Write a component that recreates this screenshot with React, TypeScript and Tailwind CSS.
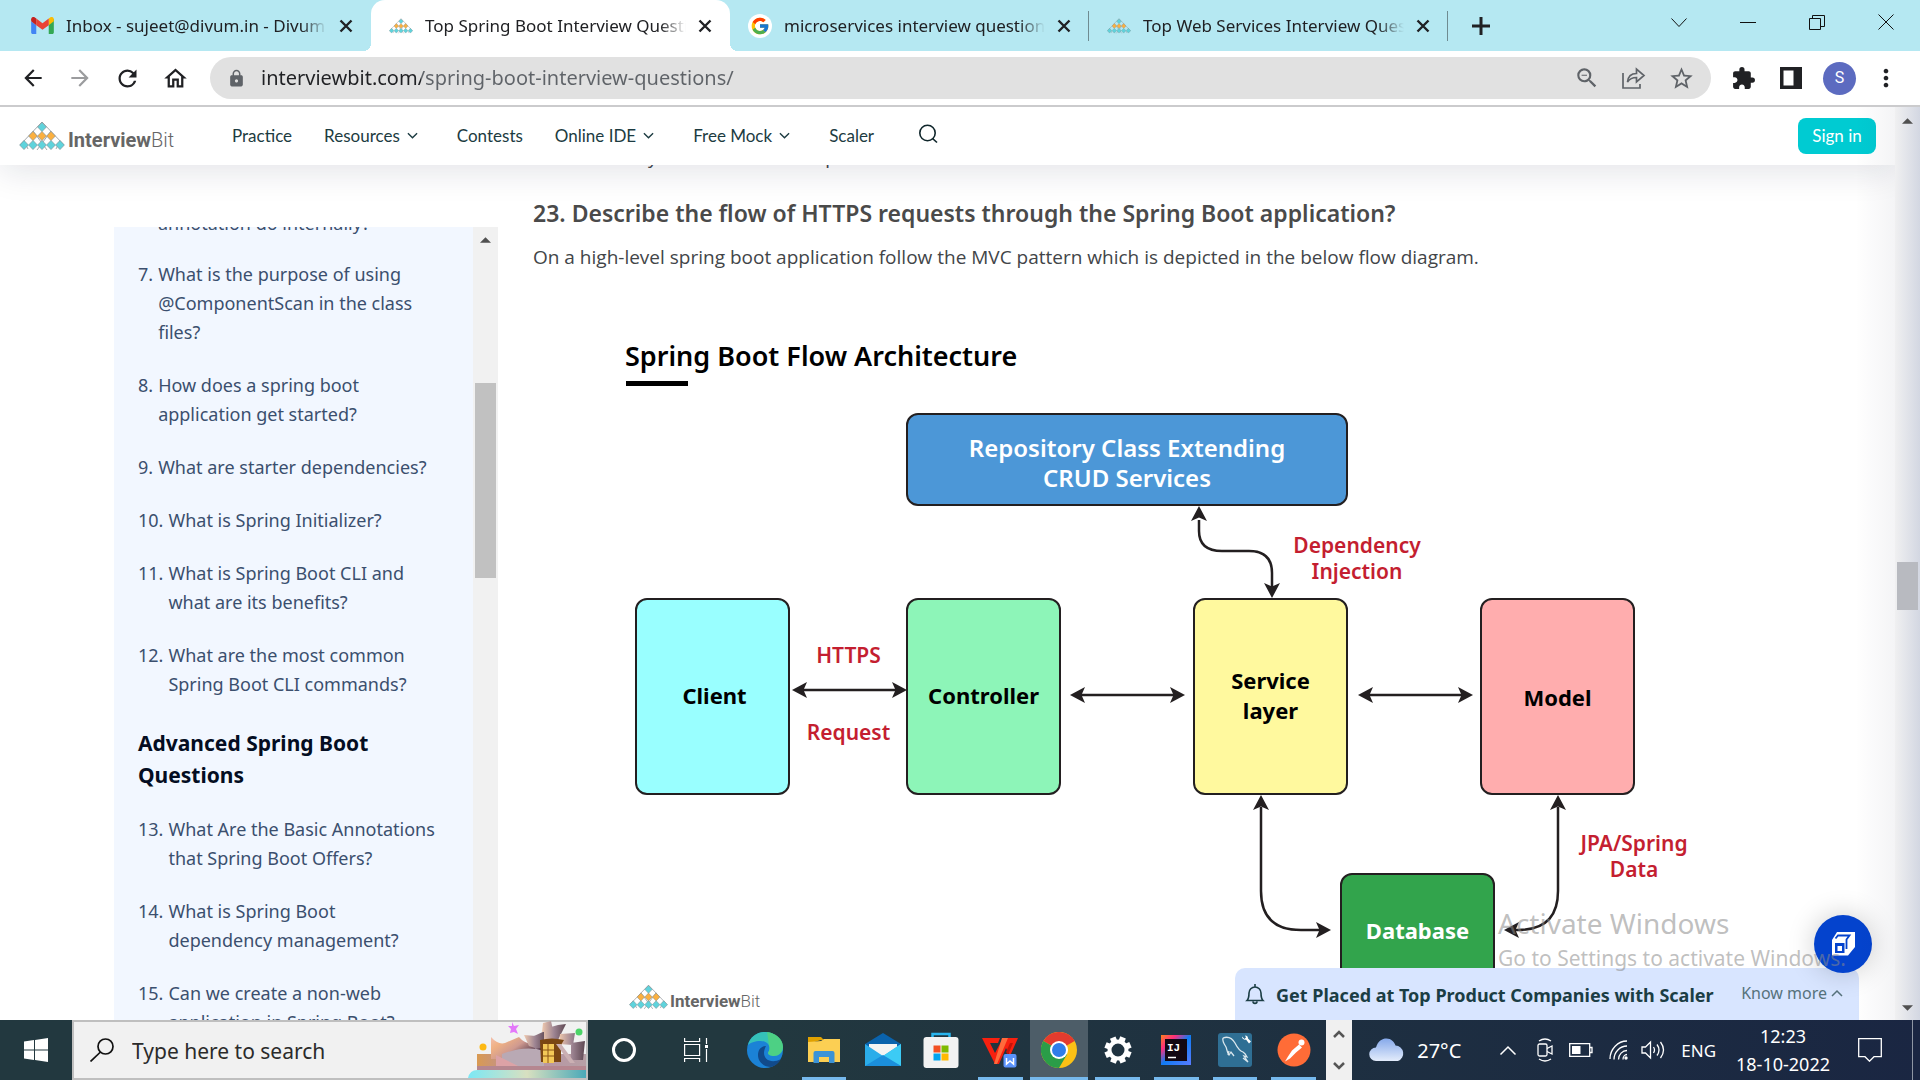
import type { ReactNode } from 'react';
import {
  MdArrowBack,
  MdArrowForward,
  MdExtension,
  MdLock,
  MdMoreVert,
  MdOutlineHome,
  MdRefresh,
  MdStarOutline,
  MdZoomOut,
} from 'react-icons/md';
import { FcGoogle } from 'react-icons/fc';

const ui = "font-['Noto_Sans',sans-serif]";

/* ---------- shared drawings ---------- */

function Pyramid({ className }: { className: string }) {
  const cells: [number, number, string][] = [
    [23, 5, '#5fd3dc'],
    [14, 14, '#fbb040'],
    [23, 14, '#fbb040'],
    [32, 14, '#fbb040'],
    [5, 23, '#5fd3dc'],
    [14, 23, '#5fd3dc'],
    [23, 23, '#5fd3dc'],
    [32, 23, '#5fd3dc'],
    [41, 23, '#5fd3dc'],
  ];
  return (
    <svg viewBox="0 0 46 28" className={className} aria-hidden="true">
      <path d="M23 0 45 23M23 0 1 23M14 9l14 19M32 9 18 28M5 19l4 8M41 19l-4 8" stroke="#8a8f94" strokeWidth="0.8" fill="none" />
      {cells.map(([x, y, c]) => (
        <path key={`${x}-${y}`} d={`M${x} ${y - 4.6}l4.4 4.6-4.4 4.6-4.4-4.6z`} fill={c} stroke="#7c8a8e" strokeWidth="0.6" />
      ))}
    </svg>
  );
}

function Chevron({ className, up }: { className: string; up?: boolean }) {
  return (
    <svg viewBox="0 0 12 8" className={className} fill="none" stroke="currentColor" strokeWidth="1.5" aria-hidden="true">
      <path d={up ? 'M1 7l5-5 5 5' : 'M1 1l5 5 5-5'} />
    </svg>
  );
}

function Triangle({ down }: { down?: boolean }) {
  return (
    <svg viewBox="0 0 12 6" className="h-[6px] w-[11px]" fill="#505050" aria-hidden="true">
      <path d={down ? 'M0 0h12L6 6z' : 'M0 6h12L6 0z'} />
    </svg>
  );
}

/* ---------- browser chrome ---------- */

function GmailIcon() {
  return (
    <svg viewBox="0 0 24 18" className="h-[17px] w-[23px]" aria-hidden="true">
      <path d="M0 2v14.4C0 17.3.7 18 1.6 18h3.8V8.7L0 4.6z" fill="#4285f4" />
      <path d="M18.6 18h3.8c.9 0 1.6-.7 1.6-1.6V2l-5.4 2z" fill="#34a853" />
      <path d="M18.6 1.6v7.1L24 4.6V2.4c0-2-2.3-3.2-3.9-2z" fill="#fbbc04" />
      <path d="M5.4 8.7V1.6L12 6.6l6.6-5v7.1L12 13.6z" fill="#ea4335" />
      <path d="M0 2.4v2.2l5.4 4.1V1.6L3.9.4C2.300-.8 0 .4 0 2.400z" fill="#c5221f" />
    </svg>
  );
}

function Tab({ icon, title, active, divider }: { icon: ReactNode; title: string; active?: boolean; divider?: boolean }) {
  return (
    <div
      className={
        active
          ? 'relative flex h-full w-[359px] items-center gap-3 rounded-t-[14px] bg-white px-[18px]'
          : 'relative flex h-full w-[359px] items-center gap-3 px-[18px]'
      }
    >
      <span className="flex w-6 shrink-0 justify-center">{icon}</span>
      <button className="min-w-0 flex-1 overflow-hidden text-left text-[17px] whitespace-nowrap text-[#202124] [mask-image:linear-gradient(to_right,black_90%,transparent)]">
        {title}
      </button>
      <button aria-label={`Close ${title}`} className="shrink-0">
        <svg viewBox="0 0 14 14" className="size-[14px]" stroke="#202124" strokeWidth="2.4" aria-hidden="true">
          <path d="M1.500 1.500l11 11M12.500 1.500l-11 11" />
        </svg>
      </button>
      {divider && <span className="absolute top-[11px] right-0 h-[30px] w-px bg-[#6f8b91]" />}
      {active && (
        <>
          <span className="absolute bottom-0 -left-2 h-2 w-2 bg-[radial-gradient(circle_at_top_left,transparent_8px,white_8px)]" />
          <span className="absolute -right-2 bottom-0 h-2 w-2 bg-[radial-gradient(circle_at_top_right,transparent_8px,white_8px)]" />
        </>
      )}
    </div>
  );
}

function TabStrip() {
  return (
    <div className="flex h-[51px] shrink-0 items-center bg-[#b5e8f2] pl-3">
      <Tab icon={<GmailIcon />} title="Inbox - sujeet@divum.in - Divum" />
      <Tab active icon={<Pyramid className="h-4 w-6" />} title="Top Spring Boot Interview Questi" />
      <Tab
        divider
        icon={
          <span className="flex size-6 items-center justify-center rounded-full bg-white">
            <FcGoogle className="size-5" />
          </span>
        }
        title="microservices interview questions"
      />
      <Tab divider icon={<Pyramid className="h-4 w-6" />} title="Top Web Services Interview Ques" />
      <button aria-label="New tab" className="ml-6">
        <svg viewBox="0 0 18 18" className="size-[18px]" stroke="#202124" strokeWidth="3" aria-hidden="true">
          <path d="M9 0v18M0 9h18" />
        </svg>
      </button>
      <div className="mr-[26px] mb-2 ml-auto flex gap-[53px]">
        {[
          ['Search tabs', 'M.5 4.500l7.500 8 7.500-8'],
          ['Minimize', 'M0 8.500h16'],
          ['Restore', 'M.5 4.500h11v11h-11zM3.500 4V1.500h12v11H12'],
          ['Close', 'M.5.5l15 15M15.500.5l-15 15'],
        ].map(([label, d]) => (
          <button key={label} aria-label={label}>
            <svg viewBox="0 0 16 16" className="size-4" fill="none" stroke="#111" strokeWidth="1" aria-hidden="true">
              <path d={d} />
            </svg>
          </button>
        ))}
      </div>
    </div>
  );
}

function Toolbar() {
  return (
    <div className="flex h-[56px] shrink-0 items-center border-b-2 border-[#cbcbcd] bg-white pr-5 pl-5 text-[#202124]">
      <div className="flex w-[190px] shrink-0 items-center gap-[21px]">
        <button aria-label="Back"><MdArrowBack className="size-[26px]" /></button>
        <button aria-label="Forward" className="text-[#9b9c9e]"><MdArrowForward className="size-[26px]" /></button>
        <button aria-label="Reload"><MdRefresh className="size-[27px]" /></button>
        <button aria-label="Home"><MdOutlineHome className="size-[27px]" /></button>
      </div>
      <div className="flex h-[42px] flex-1 items-center rounded-full bg-[#e1e1e1] pr-4 pl-[17px]">
        <MdLock className="size-[19px] text-[#5f6368]" />
        <input
          type="text"
          aria-label="Address"
          defaultValue="interviewbit.com/spring-boot-interview-questions/"
          className="ml-[15px] flex-1 bg-[linear-gradient(to_right,#202124_160px,#5f6368_160px)] bg-clip-text text-xl text-transparent outline-none"
        />
        <div className="flex items-center gap-[22px] text-[#5f6368]">
          <button aria-label="Zoom"><MdZoomOut className="size-[26px]" /></button>
          <button aria-label="Share">
            <svg viewBox="0 0 24 22" className="h-[22px] w-6" fill="none" stroke="currentColor" strokeWidth="1.700" aria-hidden="true">
              <path d="M1 6v15h17v-4M5.500 15c.5-5.500 4-8.500 9-8.500V2l7.500 6.500-7.500 6.500v-4.500c-4 0-7 1.500-9 4.500z" />
            </svg>
          </button>
          <button aria-label="Bookmark"><MdStarOutline className="size-[27px]" /></button>
        </div>
      </div>
      <div className="ml-5 flex items-center">
        <button aria-label="Extensions"><MdExtension className="size-[25px]" /></button>
        <button aria-label="Side panel" className="ml-6">
          <svg viewBox="0 0 22 22" className="size-[22px]" aria-hidden="true">
            <path d="M0 0h22v22H0z" fill="#202124" />
            <path d="M3.500 3.500h10v15h-10z" fill="#fff" />
          </svg>
        </button>
        <button aria-label="Profile" className="ml-[21px] size-[33px] rounded-full bg-[#5c6bc0] font-['Roboto',sans-serif] text-base text-white">S</button>
        <button aria-label="Menu" className="ml-4"><MdMoreVert className="size-[28px]" /></button>
      </div>
    </div>
  );
}

/* ---------- site ---------- */

const navLinks: [string, boolean][] = [
  ['Practice', false],
  ['Resources', true],
  ['Contests', false],
  ['Online IDE', true],
  ['Free Mock', true],
  ['Scaler', false],
];

function SiteHeader() {
  return (
    <header className="relative z-10 flex h-[58px] shrink-0 items-center bg-white pr-[19px] pl-[19px] font-['Lato',sans-serif] text-[17px] text-[#1c3b41] shadow-[0_6px_34px_rgba(20,24,60,0.12)]">
      <a href="#" className="flex w-[213px] items-end gap-[3px] text-[#666]">
        <Pyramid className="h-[28px] w-[46px]" />
        <span className="font-['Roboto',sans-serif] text-xl leading-5 font-bold">
          Interview<span className="font-light">Bit</span>
        </span>
      </a>
      <nav className="flex">
        {navLinks.map(([label, more]) => (
          <a key={label} href="#" className="mr-8 flex items-center">
            {label}
            {more && <Chevron className="mr-[7px] ml-[7px] h-2 w-[11px]" />}
          </a>
        ))}
      </nav>
      <button aria-label="Search" className="mb-1 ml-3">
        <svg viewBox="0 0 20 20" className="size-5" fill="none" stroke="#10262b" strokeWidth="1.600" aria-hidden="true">
          <circle cx="9.500" cy="9" r="7.700" />
          <path d="M14.500 14.500l4.500 4" />
        </svg>
      </button>
      <button className="ml-auto h-9 w-[78px] rounded-lg bg-[#00cbd2] text-white">Sign in</button>
    </header>
  );
}

const basicQuestions: [string, string][] = [
  ['7.', 'What is the purpose of using\n@ComponentScan in the class\nfiles?'],
  ['8.', 'How does a spring boot\napplication get started?'],
  ['9.', 'What are starter dependencies?'],
  ['10.', 'What is Spring Initializer?'],
  ['11.', 'What is Spring Boot CLI and\nwhat are its benefits?'],
  ['12.', 'What are the most common\nSpring Boot CLI commands?'],
];

const advancedQuestions: [string, string][] = [
  ['13.', 'What Are the Basic Annotations\nthat Spring Boot Offers?'],
  ['14.', 'What is Spring Boot\ndependency management?'],
  ['15.', 'Can we create a non-web\napplication in Spring Boot?'],
];

function QuestionList({ items }: { items: [string, string][] }) {
  return (
    <ol className="flex flex-col gap-6">
      {items.map(([n, text]) => (
        <li key={n}>
          <a href="#" className="flex gap-[5px] whitespace-pre">
            <span>{n}</span>
            <span>{text}</span>
          </a>
        </li>
      ))}
    </ol>
  );
}

function Sidebar() {
  return (
    <aside className="mt-[62px] ml-[114px] flex w-[384px] shrink-0 overflow-hidden bg-[#f2f7ff]">
      <div className="-mt-[18px] h-0 flex-1 pl-6 text-lg leading-[29px] text-[#3b4f6e]">
        <p className="mb-[22px] pl-5">annotation do internally?</p>
        <QuestionList items={basicQuestions} />
        <h3 className="mt-7 mb-6 text-[21px] leading-8 font-bold text-[#040d22]">
          Advanced Spring Boot
          <br />
          Questions
        </h3>
        <QuestionList items={advancedQuestions} />
      </div>
      <div className="flex w-[25px] flex-col items-center bg-[#f1f1f1] pt-[10px]">
        <Triangle />
        <div className="mt-[140px] h-[195px] w-[21px] bg-[#c1c1c1]" />
      </div>
    </aside>
  );
}

function Node({ className, children }: { className: string; children: ReactNode }) {
  return (
    <div className={`absolute flex items-center justify-center rounded-xl border-2 border-[#231f20] text-center text-[22px] leading-[30px] font-bold ${className}`}>
      {children}
    </div>
  );
}

function ArrowHead({ x, y, turn }: { x: number; y: number; turn: number }) {
  return <path d="M0 0-15 8l3.500-8-3.500-8z" transform={`translate(${x} ${y}) rotate(${turn})`} fill="#231f20" stroke="none" />;
}

function Connectors() {
  return (
    <svg viewBox="0 0 1180 690" className="absolute top-0 left-0 h-[690px] w-[1180px]" fill="none" stroke="#231f20" strokeWidth="2.500" aria-hidden="true">
      <path d="M269 360h94M547 365h94M835 365h94" />
      <path d="M666 190v11q0 20 23 20h27q23 0 23 22v14" />
      <path d="M728 477v84q0 39 40 39h20M1025 477v84q0 39-40 39h-4" />
      <ArrowHead x={259} y={360} turn={180} />
      <ArrowHead x={374} y={360} turn={0} />
      <ArrowHead x={537} y={365} turn={180} />
      <ArrowHead x={652} y={365} turn={0} />
      <ArrowHead x={825} y={365} turn={180} />
      <ArrowHead x={940} y={365} turn={0} />
      <ArrowHead x={666} y={176} turn={-90} />
      <ArrowHead x={739} y={268} turn={90} />
      <ArrowHead x={728} y={465} turn={-90} />
      <ArrowHead x={1025} y={465} turn={-90} />
      <ArrowHead x={798} y={600} turn={0} />
      <ArrowHead x={971} y={600} turn={180} />
    </svg>
  );
}

function FlowDiagram() {
  const label = 'absolute text-center text-[21px] leading-[26px] font-semibold text-[#c41e30]';
  return (
    <figure className="relative h-[690px] overflow-hidden text-black">
      <figcaption className="absolute top-2 left-[92px] text-[27px] leading-9 font-semibold whitespace-nowrap">
        Spring Boot Flow Architecture
      </figcaption>
      <span className="absolute top-[51px] left-[93px] h-[5px] w-[62px] bg-black" />
      <Connectors />
      <Node className="top-[83px] left-[373px] h-[93px] w-[442px] bg-[#4c97d7] pt-1.5 text-white">
        <span className="text-2xl leading-[30px] font-semibold">
          Repository Class Extending
          <br />
          CRUD Services
        </span>
      </Node>
      <Node className="top-[268px] left-[102px] h-[197px] w-[155px] bg-[#99ffff] pb-1 pl-1">Client</Node>
      <Node className="top-[268px] left-[373px] h-[197px] w-[155px] bg-[#8df5b8] pb-1">Controller</Node>
      <Node className="top-[268px] left-[660px] h-[197px] w-[155px] bg-[#fff99e] pb-1">
        Service
        <br />
        layer
      </Node>
      <Node className="top-[268px] left-[947px] h-[197px] w-[155px] bg-[#ffadae]">Model</Node>
      <Node className="top-[543px] left-[807px] h-[116px] w-[155px] bg-[#32a44c] pb-0.5 text-white">Database</Node>
      <span className={`top-[312px] left-[257px] w-[117px] ${label}`}>HTTPS</span>
      <span className={`top-[389px] left-[257px] w-[117px] ${label}`}>Request</span>
      <span className={`top-[202px] left-[744px] w-[160px] ${label}`}>
        Dependency
        <br />
        Injection
      </span>
      <span className={`top-[500px] left-[1021px] w-[160px] ${label}`}>
        JPA/Spring
        <br />
        Data
      </span>
      <div className="absolute top-[655px] left-[96px] flex items-end gap-[2px] text-[#666]">
        <Pyramid className="h-6 w-[39px]" />
        <span className="font-['Roboto',sans-serif] text-[17px] leading-4 font-bold">
          Interview<span className="font-light">Bit</span>
        </span>
      </div>
    </figure>
  );
}

function Article() {
  return (
    <main className="ml-[35px] min-w-0 flex-1">
      <p className="flex h-8 gap-[168px] pl-[115px] text-lg text-[#424548]" aria-hidden="true">
        <span className="-mt-[22px]">y</span>
        <span className="-mt-[22px]">p</span>
      </p>
      <h2 className="text-[23px] leading-8 font-semibold text-[#4a4a4a]">
        23. Describe the flow of HTTPS requests through the Spring Boot application?
      </h2>
      <p className="mt-[14px] mb-[58px] font-['Open_Sans',sans-serif] text-[19px] leading-[29px] text-[#424548]">
        On a high-level spring boot application follow the MVC pattern which is depicted in the below flow diagram.
      </p>
      <FlowDiagram />
    </main>
  );
}

function Promo() {
  return (
    <div className="absolute right-[36px] bottom-0 z-10 flex h-[52px] w-[624px] items-center rounded-t-[10px] bg-[#d8e5ff] pr-4 pl-[10px] text-[#1b3d44]">
      <svg viewBox="0 0 20 22" className="h-[22px] w-5" fill="none" stroke="currentColor" strokeWidth="1.600" aria-hidden="true">
        <path d="M2 17.500c2-2 2-4 2-7.500a6 6 0 0 1 12 0c0 3.500 0 5.500 2 7.500zM8 18.500c0 2.500 4 2.500 4 0M10 1v3" />
      </svg>
      <span className="ml-[11px] pt-0.5 text-lg font-bold">Get Placed at Top Product Companies with Scaler</span>
      <button className="mb-0.5 ml-auto flex items-center gap-1 text-base text-[#56727c]">
        Know more
        <Chevron up className="h-2 w-3" />
      </button>
    </div>
  );
}

function ChatButton() {
  return (
    <button aria-label="Open assistant" className="absolute right-[23px] bottom-[47px] z-20 flex size-[58px] items-center justify-center rounded-full bg-[#0443cd] shadow-[0_0_28px_rgba(0,0,0,0.2)]">
      <svg viewBox="0 0 24 24" className="size-6" aria-hidden="true">
        <path d="M1 8 6 0h18v15l-7 8.500H1z" fill="#fff" />
        <path d="M4.500 6.500 7 3.500h11.500l-3 4v9.500" fill="none" stroke="#0443cd" strokeWidth="1.800" />
        <path d="M4 11h9.500v10H4z" fill="#0443cd" />
        <path d="M6.500 14h4.500v5H6.500z" fill="#fff" />
      </svg>
    </button>
  );
}

function PageScrollbar() {
  return (
    <div className="flex w-[25px] shrink-0 flex-col items-center bg-linear-to-r from-[#f0f0f1] to-[#d3d7e2] pt-[11px] pb-[9px]">
      <Triangle />
      <div className="mt-[438px] mb-auto h-12 w-[21px] bg-[#b8bac0]" />
      <Triangle down />
    </div>
  );
}

/* ---------- taskbar ---------- */

function SearchArt() {
  return (
    <svg viewBox="0 0 118 58" className="absolute right-0 bottom-0 h-[58px] w-[118px]" aria-hidden="true">
      <defs>
        <linearGradient id="hull" x1="0" x2="1">
          <stop offset="0" stopColor="#d99a52" />
          <stop offset="0.350" stopColor="#b98fa0" />
          <stop offset="1" stopColor="#b7a0a6" />
        </linearGradient>
        <linearGradient id="sail" x1="0" x2="1" y2="0.600">
          <stop offset="0" stopColor="#f3bfae" />
          <stop offset="0.250" stopColor="#f0b183" />
          <stop offset="0.550" stopColor="#cf9a90" />
          <stop offset="1" stopColor="#3c2740" />
        </linearGradient>
        <linearGradient id="steel" x1="0" x2="1">
          <stop offset="0" stopColor="#f0c9ae" />
          <stop offset="0.500" stopColor="#9d8492" />
          <stop offset="1" stopColor="#5e4852" />
        </linearGradient>
        <linearGradient id="water" x1="0" x2="1">
          <stop offset="0" stopColor="#7be8f5" />
          <stop offset="0.500" stopColor="#d8e0c0" />
          <stop offset="1" stopColor="#4aa9b8" />
        </linearGradient>
      </defs>
      <path d="M9 34h109v14H9z" fill="url(#hull)" />
      <path d="M23 17q7 8 14 6l14-6q6 7 12 6l12-4v20H23z" fill="url(#sail)" />
      <path d="M56 15l12 1-1 12-6-2zM66 16l11-5 1 16-11 2z" fill="url(#steel)" />
      <path d="M75 3l8-2 2 9-11 2zM76 9l14-4 8-1-8 16-14 2z" fill="url(#steel)" />
      <path d="M92 14l15-1-2 12-14-1zM103 23l14-2-2 19h-12z" fill="url(#steel)" />
      <path d="M34 34q24-9 42-3v16H34z" fill="#b9a9b4" />
      <path d="M28 35l22 11H28z" fill="#dca2a6" />
      <path d="M72 20q12-3 24 0l-3 5v17H73z" fill="#7a4713" />
      <path d="M75 24h11v19H75z" fill="#f3c958" />
      <path d="M80 24v19M75 30h11M75 36h11" stroke="#8a5415" strokeWidth="1" />
      <path d="M88 24h5l14 19h-5z" fill="#cbb0b3" />
      <path d="M9 46h109v4H9z" fill="#b58790" />
      <path d="M0 58q2-9 11-8h107v8z" fill="url(#water)" />
      <path d="M44 2l2 4 5-1-3 4 2 5-4-2-4 1 1-4-3-3h4z" fill="#e377fa" />
      <circle cx="15" cy="27" r="3.500" fill="#fdb913" />
      <circle cx="111" cy="12" r="3.500" fill="#4bd468" />
    </svg>
  );
}

const appIcons: { name: string; state: 'idle' | 'open' | 'active'; art: ReactNode }[] = [
  {
    name: 'Microsoft Edge',
    state: 'idle',
    art: (
      <>
        <circle cx="18" cy="18" r="18" fill="#1b82d6" />
        <path d="M1 13C3 5 10 0 18 0c10 0 18 7 18 15 0 6-5 9-9 9-3 0-6-1-6-3 0-1 1.500-2 1.500-5 0-4-4-7-9-7C8 9 3 11 1 13z" fill="#35c1b9" />
        <path d="M20 0c9 1 16 7 16 15 0 6-5 9-9 9-3 0-6-1-6-3 0-1 1.500-2 1.500-5z" fill="#5bd867" opacity="0.650" />
        <path d="M19 14c-5 0-8 4-8 9 0 7 6 12 13 12 4-1 8-4 10-8-9 5-17 1-17-6 0-3 1-5 2-7z" fill="#114a8b" />
      </>
    ),
  },
  {
    name: 'File Explorer',
    state: 'open',
    art: (
      <>
        <path d="M2 5h13l3 3h-3L2 12z" fill="#e0a100" />
        <path d="M2 10l13-1 3-2h16v23H2z" fill="#fccf53" />
        <path d="M7.500 31V21a2 2 0 0 1 2-2h17a2 2 0 0 1 2 2v10H23v-6H13v6z" fill="#3c93d6" />
      </>
    ),
  },
  {
    name: 'Mail',
    state: 'idle',
    art: (
      <>
        <path d="M0 12L18 1l18 11v5H0z" fill="#0a63ad" />
        <path d="M4 12h28v8L18 27 4 20z" fill="#f4f4f4" />
        <path d="M0 12l18 12 18-12v22H0z" fill="#2badea" />
        <path d="M18 24l18-12v22z" fill="#3ccbf5" />
        <path d="M0 34l18-11 18 11z" fill="#1b8fdc" />
      </>
    ),
  },
  {
    name: 'Microsoft Store',
    state: 'idle',
    art: (
      <>
        <path d="M9.500 7V2h17v5" fill="none" stroke="#28b5ee" strokeWidth="2.500" />
        <rect x="0.500" y="5" width="35" height="31" rx="3" fill="#f2f2f2" />
        <path d="M10.500 13.500h7v7h-7z" fill="#f25022" />
        <path d="M18.500 13.500h7v7h-7z" fill="#7fba00" />
        <path d="M10.500 21.500h7v7h-7z" fill="#00a4ef" />
        <path d="M18.500 21.500h7v7h-7z" fill="#ffb900" />
      </>
    ),
  },
  {
    name: 'WPS Office',
    state: 'open',
    art: (
      <>
        <path d="M0 6h18l-2 5H8l5 10 8-15h15l-8 18-4-8-7 16h-4z" fill="#f8200f" />
        <path d="M20 6h6L15 32h-3z" fill="#ff6a3c" />
        <path d="M28 11l-4 9 2 3 5-12z" fill="#c4130a" />
        <rect x="21.500" y="22" width="13" height="13.500" rx="2" fill="#5b93fb" />
        <path d="M24.500 26v6l3.500-3 3.500 3v-6" fill="none" stroke="#fff" strokeWidth="1.500" />
      </>
    ),
  },
  {
    name: 'Google Chrome',
    state: 'active',
    art: (
      <>
        <circle cx="18" cy="18" r="18" fill="#fbc116" />
        <path d="M18 18L2.400 9A18 18 0 0 1 33.600 9z" fill="#e33b2e" />
        <path d="M18 9h15.600a18 18 0 0 0-3-4z" fill="#e33b2e" />
        <path d="M2.400 9A18 18 0 0 0 18 36l8-13.500-8-4.500z" fill="#2a9d48" />
        <circle cx="18" cy="18" r="9" fill="#fff" />
        <circle cx="18" cy="18" r="7" fill="#2f7de9" />
      </>
    ),
  },
  {
    name: 'Settings',
    state: 'open',
    art: (
      <>
        <circle cx="18" cy="18" r="8.500" fill="none" stroke="#fff" strokeWidth="4" />
        {[22, 67, 112, 157, 202, 247, 292, 337].map((a) => (
          <path key={a} d="M15 4.500h6v5h-6z" fill="#fff" transform={`rotate(${a} 18 18)`} />
        ))}
      </>
    ),
  },
  {
    name: 'IntelliJ IDEA',
    state: 'open',
    art: (
      <>
        <defs>
          <linearGradient id="ij" x1="0" y1="0" x2="1" y2="1">
            <stop offset="0" stopColor="#fc801d" />
            <stop offset="0.250" stopColor="#fe2e7c" />
            <stop offset="0.500" stopColor="#0f7bf3" />
            <stop offset="1" stopColor="#5a7bff" />
          </linearGradient>
        </defs>
        <path d="M3 3h30v30H3z" fill="url(#ij)" />
        <path d="M7 7h22v22H7z" fill="#120712" />
        <text x="9" y="18.500" fontSize="11" fontWeight="700" fontFamily="Liberation Mono, monospace" fill="#fff">IJ</text>
        <path d="M10 25.500h8" stroke="#fff" strokeWidth="1.500" />
      </>
    ),
  },
  {
    name: 'MySQL Workbench',
    state: 'open',
    art: (
      <>
        <rect x="1" y="1" width="34" height="34" rx="3" fill="#2f6f94" />
        <path d="M6 6c5-2 9 0 12 5 2 4 5 8 8 9 2 1 3 3 4 5l-3-1 4 6-5-4M6 6c-1 3 1 6 3 9 1 2 1 6 3 8l2-3 3 4M11 23l1-4" fill="none" stroke="#dbe8ee" strokeWidth="1.300" />
        <path d="M25 4.500a3 3 0 0 0 4 3l3 4 2-2-3-3a3 3 0 0 0-3-3l1 2-1.500 1.500z" fill="#fff" />
      </>
    ),
  },
  {
    name: 'Postman',
    state: 'open',
    art: (
      <>
        <circle cx="18" cy="18" r="16.500" fill="#ff6c37" />
        <circle cx="25.500" cy="10.500" r="3" fill="#fff" />
        <path d="M23 12.500l3 3-6 5-6 6-5 3 3-5 4-6z" fill="#fff" />
      </>
    ),
  },
];

function Taskbar() {
  return (
    <footer className="flex h-[60px] shrink-0 bg-linear-to-r from-[#22383f] from-40% to-[#1a2642] text-white">
      <button aria-label="Start" className="flex w-[72px] shrink-0 items-center justify-center">
        <svg viewBox="0 0 24 24" className="size-6" fill="#fff" aria-hidden="true">
          <path d="M0 3.400l10-1.400v9.500H0zM11 1.900L24 0v11.500H11zM0 12.500h10V22L0 20.600zM11 12.500h13V24l-13-1.900z" />
        </svg>
      </button>
      <label className="relative flex w-[516px] shrink-0 items-center border-2 border-[#bfbfbf] bg-[#f1f1f1] pl-4">
        <svg viewBox="0 0 24 24" className="size-6" fill="none" stroke="#111" strokeWidth="1.700" aria-hidden="true">
          <circle cx="15.500" cy="8.500" r="7.500" />
          <path d="M10.500 14L.5 23.500" />
        </svg>
        <span className="sr-only">Search</span>
        <input type="text" placeholder="Type here to search" className="ml-[18px] w-[300px] bg-transparent pt-1 text-[21px] outline-none placeholder:text-[#2b2b2b]" />
        <SearchArt />
      </label>
      <button aria-label="Cortana" className="flex w-[72px] shrink-0 items-center justify-center">
        <span className="size-6 rounded-full border-[3px] border-white" />
      </button>
      <button aria-label="Task view" className="flex w-[72px] shrink-0 items-center justify-center">
        <svg viewBox="0 0 24 24" className="size-6" fill="none" stroke="#fff" strokeWidth="1.200" aria-hidden="true">
          <path d="M.6 6.500h15v11H.6zM.6 0v3.500h15V0M.6 24v-3.500h15V24M22.500 0v6M22.500 11v13" />
          <path d="M21 7h3v3h-3z" fill="#fff" stroke="none" />
        </svg>
      </button>
      <div className="ml-1 flex w-[587px] shrink-0">
        {appIcons.map(({ name, state, art }) => (
          <button
            key={name}
            aria-label={name}
            className={state === 'active' ? 'relative flex flex-1 items-center justify-center bg-[#4d5d68]' : 'relative flex flex-1 items-center justify-center'}
          >
            <svg viewBox="0 0 36 36" className="size-9" aria-hidden="true">
              {art}
            </svg>
            {state === 'open' && <span className="absolute inset-x-[7px] bottom-0 h-[3px] bg-[#76b9ed]" />}
            {state === 'active' && <span className="absolute inset-x-0 bottom-0 h-[3px] bg-[#76b9ed]" />}
          </button>
        ))}
      </div>
      <div className="ml-[3px] flex w-[26px] shrink-0 flex-col items-center justify-between bg-[#f0f0f0] py-[10px] text-[#555]">
        <button aria-label="Scroll up"><Chevron up className="h-2 w-3 stroke-[2.500]" /></button>
        <button aria-label="Scroll down"><Chevron className="h-2 w-3 stroke-[2.500]" /></button>
      </div>
      <div className="ml-auto flex shrink-0 items-center">
        <svg viewBox="0 0 36 24" className="h-6 w-9" aria-hidden="true">
          <defs>
            <linearGradient id="cloud" y2="1" x2="0">
              <stop offset="0" stopColor="#86a9ea" />
              <stop offset="1" stopColor="#e3ecfb" />
            </linearGradient>
          </defs>
          <path d="M7 23a6.500 6.500 0 0 1 0-13.500C9 3 13 .5 17.500.5S25.500 4 26.500 7.500A8 8 0 0 1 29 23z" fill="url(#cloud)" />
        </svg>
        <span className="ml-3 pt-0.5 text-xl">27°C</span>
        <Chevron up className="ml-[38px] h-3 w-[18px] stroke-1" />
        <svg viewBox="0 0 18 24" className="ml-[19px] h-6 w-[18px]" fill="none" stroke="#fff" strokeWidth="1.300" aria-hidden="true">
          <rect x="2" y="6" width="9" height="12" rx="1.500" />
          <path d="M11 10.500l5-2.500v8l-5-2.500M3 3q6-4 12 0M3 21q6 4 12 0" />
        </svg>
        <svg viewBox="0 0 24 14" className="ml-[15px] h-[14px] w-6" fill="none" stroke="#fff" strokeWidth="1.300" aria-hidden="true">
          <path d="M.7.7h20v12.600H.7zM21 4.500h2v5h-2" />
          <path d="M3 3h8.500v8H3z" fill="#fff" stroke="none" />
        </svg>
        <svg viewBox="0 0 20 20" className="ml-4 size-5" fill="none" stroke="#fff" strokeWidth="1.300" aria-hidden="true">
          <path d="M1 19C1 9 9 1 18 1M5 19.500C5 12 11 6 18 6M9.500 19.500c0-5 4-9 8.500-9" />
          <path d="M14 19.500c0-3 2-5 4-5" />
          <circle cx="17" cy="18" r="1.700" fill="#fff" stroke="none" />
        </svg>
        <svg viewBox="0 0 24 20" className="ml-3 h-5 w-6" fill="none" stroke="#fff" strokeWidth="1.300" aria-hidden="true">
          <path d="M1 7v6h3.500l5 5V2l-5 5zM12.500 7q2 3 0 6M16 4.500q4 5.500 0 11M19.500 2q6 8 0 16" />
        </svg>
        <span className="ml-4 pt-0.5 text-[17px]">ENG</span>
        <time className="ml-5 text-center text-lg leading-7">
          12:23
          <br />
          18-10-2022
        </time>
        <button aria-label="Notifications" className="ml-7">
          <svg viewBox="0 0 24 24" className="size-6" fill="none" stroke="#fff" strokeWidth="1.300" aria-hidden="true">
            <path d="M.7.7h22.600v18h-7.300l-4.500 4.500-4.500-4.500H.7z" />
          </svg>
        </button>
        <span className="mr-[7px] ml-[30px] h-[60px] w-px bg-[#8e96a3]" />
      </div>
    </footer>
  );
}

export default function App() {
  return (
    <div className={`flex h-screen flex-col overflow-hidden bg-white ${ui}`}>
      <TabStrip />
      <Toolbar />
      <div className="flex min-h-0 flex-1">
        <div className="relative flex min-w-0 flex-1 flex-col overflow-hidden">
          <SiteHeader />
          <div className="flex min-h-0 flex-1">
            <Sidebar />
            <Article />
          </div>
          <Promo />
          <ChatButton />
          <div className="pointer-events-none absolute inset-y-0 right-0 z-20 w-10 bg-linear-to-r from-transparent to-[#14183c0c]" />
          <div className="pointer-events-none absolute right-[8px] bottom-[46px] z-30 w-[389px] text-[#8a8a8a]/55">
            <p className="text-[28px] leading-[38px]">Activate Windows</p>
            <p className="text-[21px] leading-8">Go to Settings to activate Windows.</p>
          </div>
        </div>
        <PageScrollbar />
      </div>
      <Taskbar />
    </div>
  );
}
